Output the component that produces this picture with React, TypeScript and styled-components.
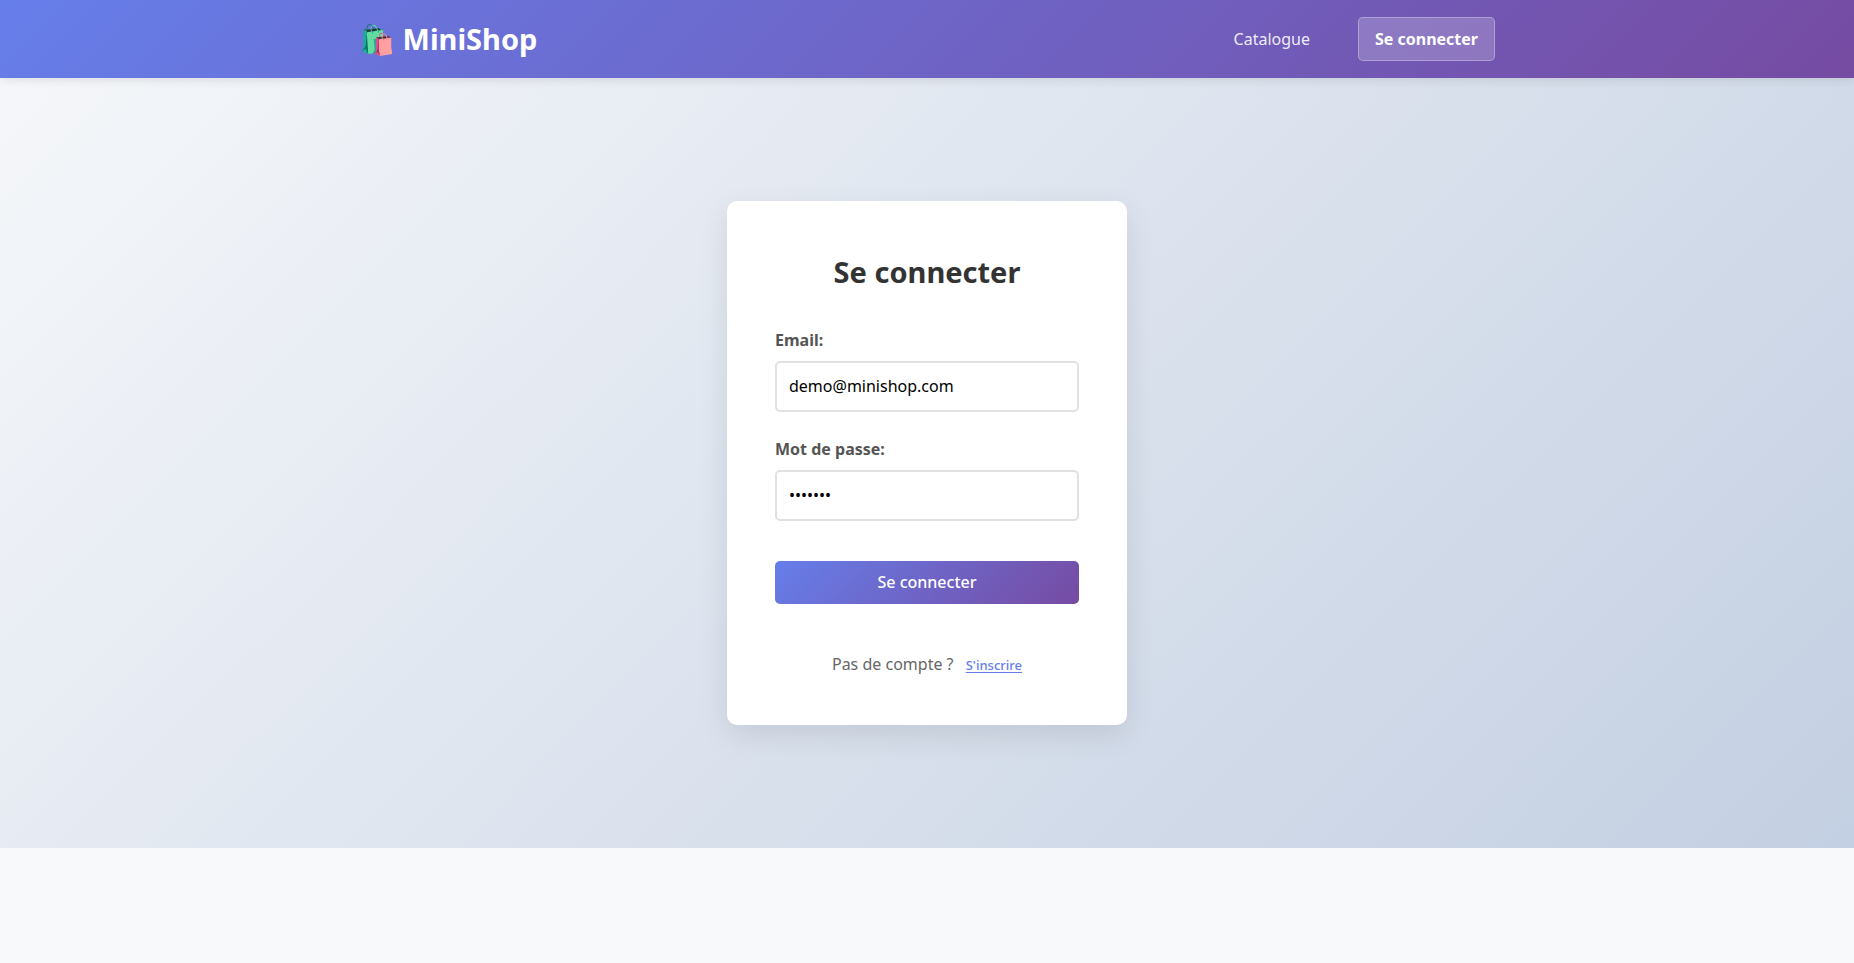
import React from 'react';
import styled, { createGlobalStyle } from 'styled-components';

const GlobalStyle = createGlobalStyle`
  * { margin: 0; padding: 0; box-sizing: border-box; }
  body {
    font-family: 'Noto Sans', sans-serif;
    background: #f8f9fb;
    color: #333;
    line-height: 26px;
  }
`;

const Header = styled.header`
  position: relative;
  background: linear-gradient(135deg, #667eea 0%, #764ba2 100%);
  box-shadow: 0 2px 10px rgba(0, 0, 0, 0.1);
  padding: 16px 0;
`;

const HeaderInner = styled.div`
  max-width: 1200px;
  margin: 0 auto;
  padding: 0 32px;
  display: flex;
  justify-content: space-between;
  align-items: center;
`;

const Brand = styled.a`
  color: white;
  text-decoration: none;
  font-size: 29px;
  line-height: 46px;
  font-weight: 700;
`;

const Nav = styled.nav`
  display: flex;
  align-items: center;
  gap: 32px;
`;

const NavLink = styled.a`
  color: rgba(255, 255, 255, 0.9);
  text-decoration: none;
  padding: 8px 16px;
`;

const NavButton = styled.button`
  font: inherit;
  font-weight: 700;
  color: white;
  padding: 8px 16px;
  border: 1px solid rgba(255, 255, 255, 0.3);
  border-radius: 5px;
  background: rgba(255, 255, 255, 0.2);
  cursor: pointer;
`;

const Main = styled.main`
  min-height: 80vh;
  display: flex;
  align-items: center;
  justify-content: center;
  background: linear-gradient(135deg, #f5f7fa 0%, #c3cfe2 100%);
`;

const Card = styled.section`
  width: 100%;
  max-width: 400px;
  padding: 48px;
  background: white;
  border-radius: 10px;
  box-shadow: 0 10px 30px rgba(0, 0, 0, 0.1);
`;

const Title = styled.h1`
  font-size: 29px;
  line-height: 46px;
  text-align: center;
  margin-bottom: 32px;
`;

const Field = styled.div`
  margin-bottom: 24px;
`;

const Label = styled.label`
  display: block;
  font-weight: 700;
  color: #555;
  margin-bottom: 8px;
`;

const Input = styled.input`
  display: block;
  width: 100%;
  padding: 12px;
  border: 2px solid #e1e1e1;
  border-radius: 5px;
  font: inherit;
  line-height: 23px;
  color: black;
`;

const Submit = styled.button`
  display: block;
  width: 100%;
  margin-top: 40px;
  padding: 10px;
  border: 0;
  border-radius: 5px;
  font: inherit;
  font-weight: 500;
  line-height: 23px;
  color: white;
  background: linear-gradient(135deg, #667eea 0%, #764ba2 100%);
  cursor: pointer;
`;

const Switch = styled.p`
  margin-top: 48px;
  line-height: 25px;
  text-align: center;
  color: #666;
`;

const LinkButton = styled.button`
  margin-left: 8px;
  border: 0;
  background: none;
  font: inherit;
  font-size: 13px;
  line-height: 18px;
  font-weight: 500;
  color: #667eea;
  text-decoration: underline;
  text-underline-offset: 2px;
  cursor: pointer;
`;

export default function App() {
  return (
    <>
      <GlobalStyle />
      <Header>
        <HeaderInner>
          <Brand href="#">🛍️ MiniShop</Brand>
          <Nav>
            <NavLink href="#">Catalogue</NavLink>
            <NavButton type="button">Se connecter</NavButton>
          </Nav>
        </HeaderInner>
      </Header>
      <Main>
        <Card>
          <Title>Se connecter</Title>
          <form>
            <Field>
              <Label htmlFor="email">Email:</Label>
              <Input id="email" type="email" defaultValue="demo@minishop.com" />
            </Field>
            <Field>
              <Label htmlFor="password">Mot de passe:</Label>
              <Input id="password" type="password" defaultValue="demo123" />
            </Field>
            <Submit type="button">Se connecter</Submit>
          </form>
          <Switch>
            Pas de compte ? <LinkButton type="button">S'inscrire</LinkButton>
          </Switch>
        </Card>
      </Main>
    </>
  );
}
